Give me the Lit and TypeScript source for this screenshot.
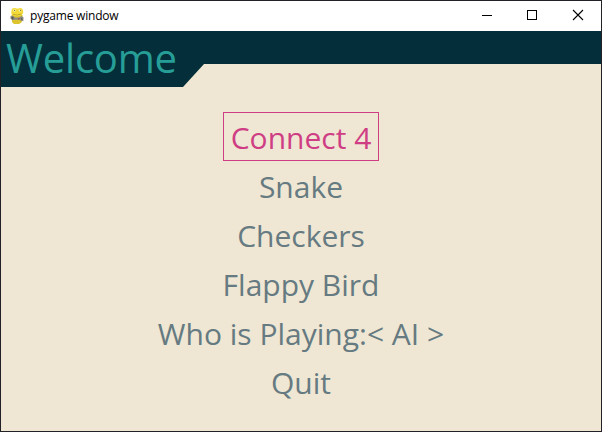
import { LitElement, html, css, svg } from "lit";
import { customElement, state } from "lit/decorators.js";
import { classMap } from "lit/directives/class-map.js";

@customElement("pygame-icon")
class PygameIcon extends LitElement {
  static styles = css`
    :host { display: block; width: 16px; height: 18px; }
    svg { display: block; }
  `;
  render() {
    return html`<svg width="16" height="18" viewBox="0 0 16 18">
      ${svg`
      <path d="M2.5 8 H13.5 V13 L12.5 15.5 L10 17 H5 L3 15Z" fill="#dcc42e"/>
      <path d="M2.8 2 Q4.5 .3 7 1.3 L8.5 1.8 L10 1.2 Q13 .3 14 3 L14.2 6 Q12 9.6 8 9.3 Q3 9.6 2.2 6Z" fill="#f2db36"/>
      <circle cx="5.4" cy="3.5" r="1.2" fill="#f4eeb4"/><circle cx="11" cy="3.6" r="1.2" fill="#f4eeb4"/>
      <rect x="5" y="3" width="1" height="1" fill="#857d3e"/><rect x="11" y="3" width="1" height="1" fill="#857d3e"/>
      <path d="M4 7.3 Q8 9 12.5 7" stroke="#b89c2a" stroke-width=".8" fill="none"/>
      <path d="M1.6 9 L4 8.8 L6 10.5 H10 L12.5 9 L14.6 10.5 L14.3 14.2 L12 13.8 L10.5 12.8 H6 L3.5 13.2 L1.4 11.5Z" fill="#8d8983"/>
      <path d="M3.5 9.8 V12.4 M2.3 11 H4.8" stroke="#55524e" stroke-width=".9"/>
      <rect x="9" y="11" width="1.6" height="1.6" fill="#a0604c"/>
      <rect x="12" y="11" width="1.2" height="1.8" fill="#625e5a"/>`}
    </svg>`;
  }
}

@customElement("title-bar")
class TitleBar extends LitElement {
  static styles = css`
    :host {
      display: flex; align-items: center; box-sizing: border-box;
      height: 30px; background: #fff; color: #000; padding-left: 8px;
      font: 12px "Open Sans", "Noto Sans", sans-serif;
    }
    .caption { margin-left: 5px; flex: 1; letter-spacing: -0.2px; white-space: nowrap; line-height: 30px; }
    svg { display: block; }
  `;
  render() {
    return html`
      <pygame-icon></pygame-icon>
      <span class="caption">pygame window</span>
      <svg width="138" height="30" viewBox="463 1 138 30" fill="none" stroke="#000" shape-rendering="crispEdges">
        <path d="M482 15.5 H492"/>
        <rect x="527.5" y="10.5" width="9" height="9"/>
        <path shape-rendering="auto" stroke-width="1.1" d="M573 10 L583 20 M583 10 L573 20"/>
      </svg>`;
  }
}

@customElement("app-root")
class AppRoot extends LitElement {
  @state() private selected = 0;
  private items = ["Connect 4", "Snake", "Checkers", "Flappy Bird", "Who is Playing:< AI >", "Quit"];

  static styles = css`
    :host {
      display: flex; flex-direction: column; box-sizing: border-box;
      width: 602px; height: 432px; overflow: hidden;
      border: 1px solid #222126; background: #efe7d3;
      font-family: "Open Sans", sans-serif;
    }
    .header {
      height: 56px; flex: none; box-sizing: border-box; padding-left: 5px;
      background: #042f3a; color: #269e97;
      clip-path: polygon(0 0, 100% 0, 100% 33px, 203px 33px, 182px 56px, 0 56px);
      font-size: 40px; line-height: 54px; letter-spacing: -0.2px; white-space: nowrap;
    }
    .menu { display: flex; flex-direction: column; align-items: center; padding-top: 25px; }
    .item {
      box-sizing: border-box; height: 49px; padding: 0 7px;
      border: 1px solid transparent; color: #667a82;
      font-size: 30px; line-height: 50px; white-space: pre;
    }
    .item.selected { color: #cf3e84; border-color: #cf3e84; }
  `;
  render() {
    return html`
      <title-bar></title-bar>
      <div class="header">Welcome</div>
      <div class="menu">
        ${this.items.map((label, i) => html`
          <div class=${classMap({ item: true, selected: i === this.selected })}>${label}</div>`)}
      </div>`;
  }
}
